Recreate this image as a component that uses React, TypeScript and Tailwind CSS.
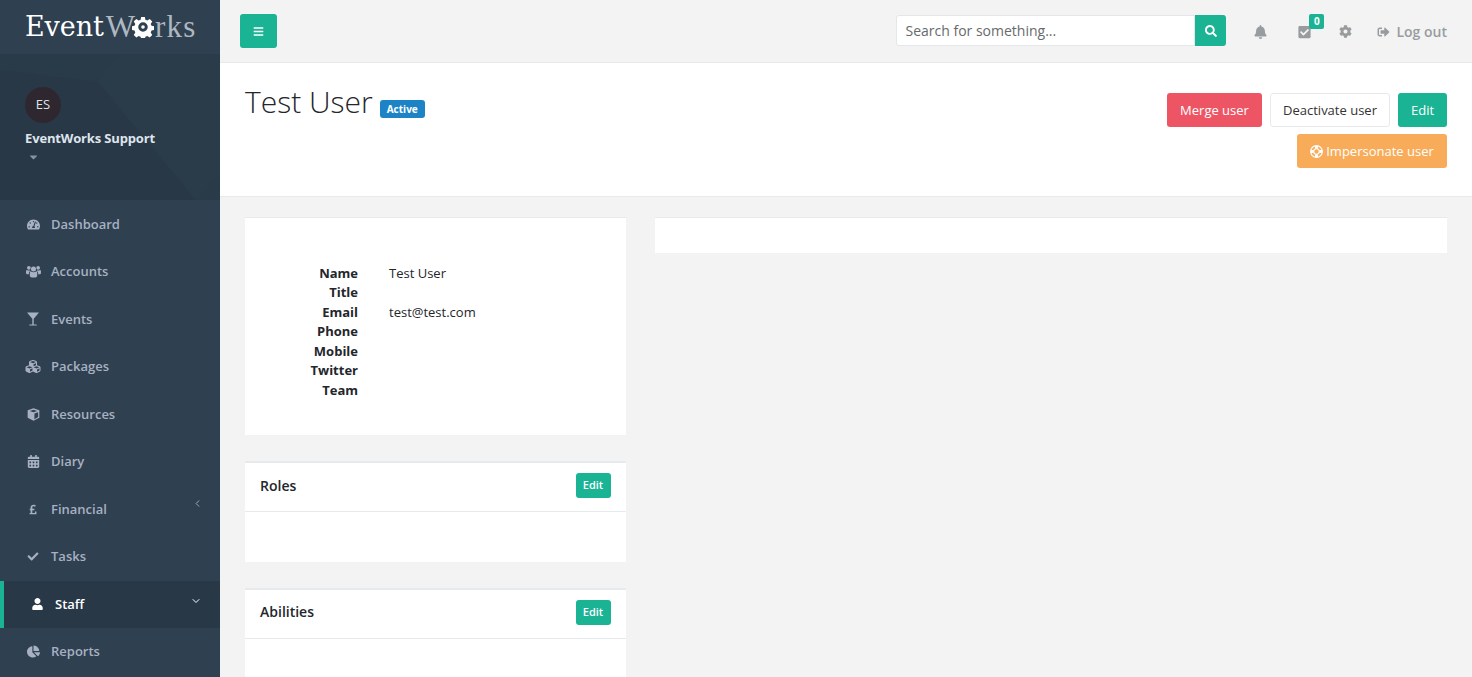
import type { ComponentType, ReactNode } from 'react';
import {
  FaBars,
  FaBell,
  FaCalendarAlt,
  FaCaretDown,
  FaChartPie,
  FaCheck,
  FaCheckSquare,
  FaCog,
  FaCubes,
  FaPoundSign,
  FaSearch,
  FaSignOutAlt,
  FaTachometerAlt,
  FaUser,
} from 'react-icons/fa';
import { FiChevronDown, FiChevronLeft } from 'react-icons/fi';

type IconProps = { className?: string };

// FA4-era glyphs that the newer sets redrew
function UsersIcon({ className }: IconProps) {
  return (
    <svg viewBox="0 0 16 14" className={className} fill="currentColor">
      <circle cx="8" cy="4.4" r="2.7" />
      <circle cx="3" cy="3" r="2" />
      <circle cx="13" cy="3" r="2" />
      <path d="M4 8.4c0-.8.6-1.3 1.3-1.3 .7.5 1.6.8 2.7.8s2-.3 2.7-.8c.7 0 1.3.5 1.3 1.3v3c0 1.2-.8 2-2 2H6c-1.2 0-2-.8-2-2z" />
      <path d="M0 6.4c0-.6.4-1 1-1 .5.4 1.2.6 2 .6.4 0 .8 0 1.2-.2.1.4.4.7.7 1C3.800 7 3 7.700 3 8.800V10H1c-.6 0-1-.4-1-1z" />
      <path d="M16 6.400c0-.6-.4-1-1-1-.5.4-1.200.6-2 .6-.4 0-.8 0-1.200-.2-.1.4-.4.7-.7 1 1.100.2 1.900.9 1.900 2V10h2c.6 0 1-.4 1-1z" />
    </svg>
  );
}

function GlassIcon({ className }: IconProps) {
  return (
    <svg viewBox="0 0 12 14" className={className} fill="currentColor">
      <path d="M0 .5h12L6.700 6.800V12.500h3V13.500H2.300V12.500h3V6.800z" />
    </svg>
  );
}

function CubeIcon({ className }: IconProps) {
  return (
    <svg viewBox="0 0 14 14" className={className} fill="currentColor">
      <path
        fillRule="evenodd"
        d="M7 .3l6.300 2.200v8L7 13.800.7 10.500v-8zM7 1.800L3 3.200l4 1.500 4-1.500zM8 6v6l4-2.200V4.500z"
      />
    </svg>
  );
}

function LifeRingIcon({ className }: IconProps) {
  return (
    <svg viewBox="0 0 14 14" className={className} fill="none" stroke="currentColor">
      <circle cx="7" cy="7" r="6.300" strokeWidth="1.300" />
      <circle cx="7" cy="7" r="2.900" strokeWidth="1.100" />
      <path d="M7 1v3M7 10v3M1 7h3M10 7h3" strokeWidth="3.200" />
    </svg>
  );
}

type NavItem = {
  label: string;
  icon: ComponentType<IconProps>;
  iconClass: string;
  active?: boolean;
  chevron?: 'left' | 'down';
};

const navItems: NavItem[] = [
  { label: 'Dashboard', icon: FaTachometerAlt, iconClass: 'ml-[2px] h-[13px] w-[13px]' },
  { label: 'Accounts', icon: UsersIcon, iconClass: 'ml-[1px] h-[13px] w-[15px]' },
  { label: 'Events', icon: GlassIcon, iconClass: 'ml-[2px] h-[14px] w-[12px]' },
  { label: 'Packages', icon: FaCubes, iconClass: 'h-[15px] w-[16px]' },
  { label: 'Resources', icon: CubeIcon, iconClass: 'ml-[2px] h-[13px] w-[13px]' },
  { label: 'Diary', icon: FaCalendarAlt, iconClass: 'ml-[2px] h-[13px] w-[13px]' },
  { label: 'Financial', icon: FaPoundSign, iconClass: 'ml-[4px] h-[11px] w-[8px]', chevron: 'left' },
  { label: 'Tasks', icon: FaCheck, iconClass: 'ml-[2px] h-[11px] w-[12px]' },
  { label: 'Staff', icon: FaUser, iconClass: 'h-[12px] w-[11px]', active: true, chevron: 'down' },
  { label: 'Reports', icon: FaChartPie, iconClass: 'ml-[2px] h-[13px] w-[13px]' },
];

const details = [
  ['Name', 'Test User'],
  ['Title', ''],
  ['Email', 'test@test.com'],
  ['Phone', ''],
  ['Mobile', ''],
  ['Twitter', ''],
  ['Team', ''],
];

function Logo() {
  return (
    <div className="flex h-[54px] items-center pl-[25px] pb-0.5 leading-none text-white">
      <span className="font-['DejaVu_Serif',serif] text-[27px] tracking-[-0.1px]">Event</span>
      <span className="ml-[2px] font-['Liberation_Serif',serif] text-[31px] text-[#aeb8c1]">W</span>
      <svg viewBox="0 0 24 24" className="-ml-[3px] mt-[2px] h-[22px] w-[22px] fill-white">
        <path
          fillRule="evenodd"
          d="M10 1h4l.6 3 2.100.9 2.600-1.700 2.800 2.800-1.700 2.600.9 2.100 3 .6v4l-3 .6-.9 2.100 1.700 2.600-2.800 2.800-2.600-1.700-2.100.9-.6 3h-4l-.6-3-2.100-.9-2.600 1.700-2.800-2.800 1.700-2.600-.9-2.100-3-.6v-4l3-.6.9-2.100-1.700-2.600 2.800-2.800 2.600 1.700 2.100-.9zM12 6.800a5.200 5.200 0 1 0 0 10.400 5.200 5.200 0 0 0 0-10.400zM12 10a2 2 0 1 1 0 4 2 2 0 0 1 0-4z"
        />
      </svg>
      <span className="ml-[1px] font-['Liberation_Serif',serif] text-[31px] tracking-[1.2px] text-[#aeb8c1]">rks</span>
    </div>
  );
}

function Profile() {
  return (
    <div className="relative h-[146px] overflow-hidden bg-[#293a49] pl-[25px] pt-[33px]">
      <svg viewBox="0 0 220 146" className="absolute inset-0 h-full w-full">
        <path d="M0 16 L98 28 L196 146 L0 146 Z" fill="#283847" />
        <path d="M98 28 L118 0 L220 0 L220 120 L196 146 Z" fill="#2a3b4a" />
      </svg>
      <div className="relative">
        <div className="flex h-9 w-9 items-center justify-center rounded-full bg-[#2e2730] text-[13px] text-[#dfe4ed]">ES</div>
        <div className="mt-[6px] text-[13px] font-bold leading-[19.5px] tracking-[-0.15px] text-[#dfe4ed]">EventWorks Support</div>
        <FaCaretDown className="ml-[4px] mt-[2px] h-[12px] w-[9px] text-[#8095a8]" />
      </div>
    </div>
  );
}

function Sidebar() {
  return (
    <aside className="w-[220px] shrink-0 bg-[#2f4050]">
      <Logo />
      <Profile />
      <nav className="pt-[0.5px]">
        {navItems.map((item) => {
          const Icon = item.icon;
          return (
            <a
              key={item.label}
              className={
                item.active
                  ? 'relative flex h-[47.5px] items-center border-l-4 border-[#1ab394] bg-[#293846] pl-[28px] text-[13px] font-semibold text-white'
                  : 'relative flex h-[47.5px] items-center pl-[25px] text-[13px] font-semibold text-[#a7b1c2]'
              }
            >
              <span className={item.active ? 'flex w-[23px] shrink-0 items-center' : 'flex w-[26px] shrink-0 items-center'}>
                <Icon className={item.iconClass} />
              </span>
              {item.label}
              {item.chevron === 'left' && (
                <FiChevronLeft className="absolute right-[17px] top-[12px] h-[11px] w-[11px]" />
              )}
              {item.chevron === 'down' && (
                <FiChevronDown className="absolute right-[18px] top-[14px] h-[12px] w-[12px]" />
              )}
            </a>
          );
        })}
      </nav>
    </aside>
  );
}

function TopBar() {
  return (
    <header className="flex h-[63px] shrink-0 items-start border-b border-[#e7eaec] bg-[#f3f3f3] pl-5 pr-[25px]">
      <button className="mt-[14px] flex h-[34px] w-[37px] items-center justify-center rounded-[3px] bg-[#1ab394] text-white">
        <FaBars className="h-[11px] w-[11px]" />
      </button>
      <div className="ml-auto mt-[15px] flex h-[31px]">
        <div className="flex w-[299px] items-center rounded-l-[3px] border border-[#e5e6e7] bg-white pl-2 text-sm text-[#676a6c]">
          Search for something...
        </div>
        <button className="flex w-[31px] items-center justify-center rounded-r-[3px] bg-[#1ab394] text-white">
          <FaSearch className="h-[12px] w-[12px]" />
        </button>
      </div>
      <div className="mt-[24px] ml-[28px] flex items-center text-[#999c9e]">
        <FaBell className="h-[14px] w-[13px]" />
        <span className="relative ml-[31px]">
          <FaCheckSquare className="h-[14px] w-[13px]" />
          <span className="absolute -right-[13px] -top-[11px] flex h-[15px] w-[15px] items-center justify-center rounded-[2px] bg-[#1ab394] text-[10px] font-bold text-white">
            0
          </span>
        </span>
        <FaCog className="ml-[28px] h-[13px] w-[13px]" />
        <FaSignOutAlt className="ml-[25px] h-[12px] w-[13px]" />
        <span className="ml-[6px] text-sm font-semibold leading-[15px]">Log out</span>
      </div>
    </header>
  );
}

function Btn({ className, children }: { className: string; children: ReactNode }) {
  return (
    <button className={`flex h-[34px] items-center justify-center rounded-[3px] pt-[1px] text-[13px] ${className}`}>
      {children}
    </button>
  );
}

function PageHead() {
  return (
    <section className="flex h-[134px] shrink-0 justify-between border-b border-[#e7eaec] bg-white pl-[25px] pr-[25px]">
      <div className="flex items-start pt-[18px]">
        <h1 className="text-[30px] font-light leading-[42px] text-[#23262b]">Test User</h1>
        <span className="ml-[7px] mt-[19px] flex h-[18px] w-[45px] items-center justify-center rounded-[3px] bg-[#1c84c6] text-[10px] font-bold text-white">
          Active
        </span>
      </div>
      <div className="flex flex-col items-end gap-[7px] pt-[30px]">
        <div className="flex gap-2">
          <Btn className="w-[95px] bg-[#ed5565] text-white">Merge user</Btn>
          <Btn className="w-[120px] border border-[#e7eaec] bg-white text-[#333]">Deactivate user</Btn>
          <Btn className="w-[49px] bg-[#1ab394] text-white">Edit</Btn>
        </div>
        <Btn className="w-[150px] gap-[3px] bg-[#f8ac59] text-white">
          <LifeRingIcon className="h-[13px] w-[13px]" />
          Impersonate user
        </Btn>
      </div>
    </section>
  );
}

function TitledPanel({ title, bodyClass }: { title: string; bodyClass: string }) {
  return (
    <div className="border-t-2 border-[#e7eaec] bg-white">
      <div className="flex h-[49px] items-center justify-between border-b border-[#e7eaec] pb-[3px] pl-[15px] pr-[15px]">
        <h5 className="text-sm font-semibold text-[#23262b]">{title}</h5>
        <button className="flex h-[25px] w-[35px] items-center justify-center rounded-[3px] bg-[#1ab394] text-[11px] font-semibold text-white">
          Edit
        </button>
      </div>
      <div className={bodyClass} />
    </div>
  );
}

export default function App() {
  return (
    <div className="flex h-[677px] w-[1472px] overflow-hidden bg-[#f3f3f3] font-['Open_Sans',sans-serif] text-[#23262b]">
      <Sidebar />
      <main className="flex min-w-0 flex-1 flex-col">
        <TopBar />
        <PageHead />
        <div className="flex items-start gap-[29.5px] pl-[25px] pr-[25px] pt-5">
          <div className="flex w-[380.5px] shrink-0 flex-col gap-[26px]">
            <div className="h-[218px] border-t border-[#e7eaec] bg-white pt-[45.5px]">
              {details.map(([label, value]) => (
                <div key={label} className="flex text-[13px] leading-[19.5px]">
                  <div className="w-[113px] text-right font-bold">{label}</div>
                  <div className="ml-[31px]">{value}</div>
                </div>
              ))}
            </div>
            <TitledPanel title="Roles" bodyClass="h-[49.5px]" />
            <TitledPanel title="Abilities" bodyClass="h-[60px]" />
          </div>
          <div className="h-[36px] flex-1 border-t border-[#e7eaec] bg-white" />
        </div>
      </main>
    </div>
  );
}
